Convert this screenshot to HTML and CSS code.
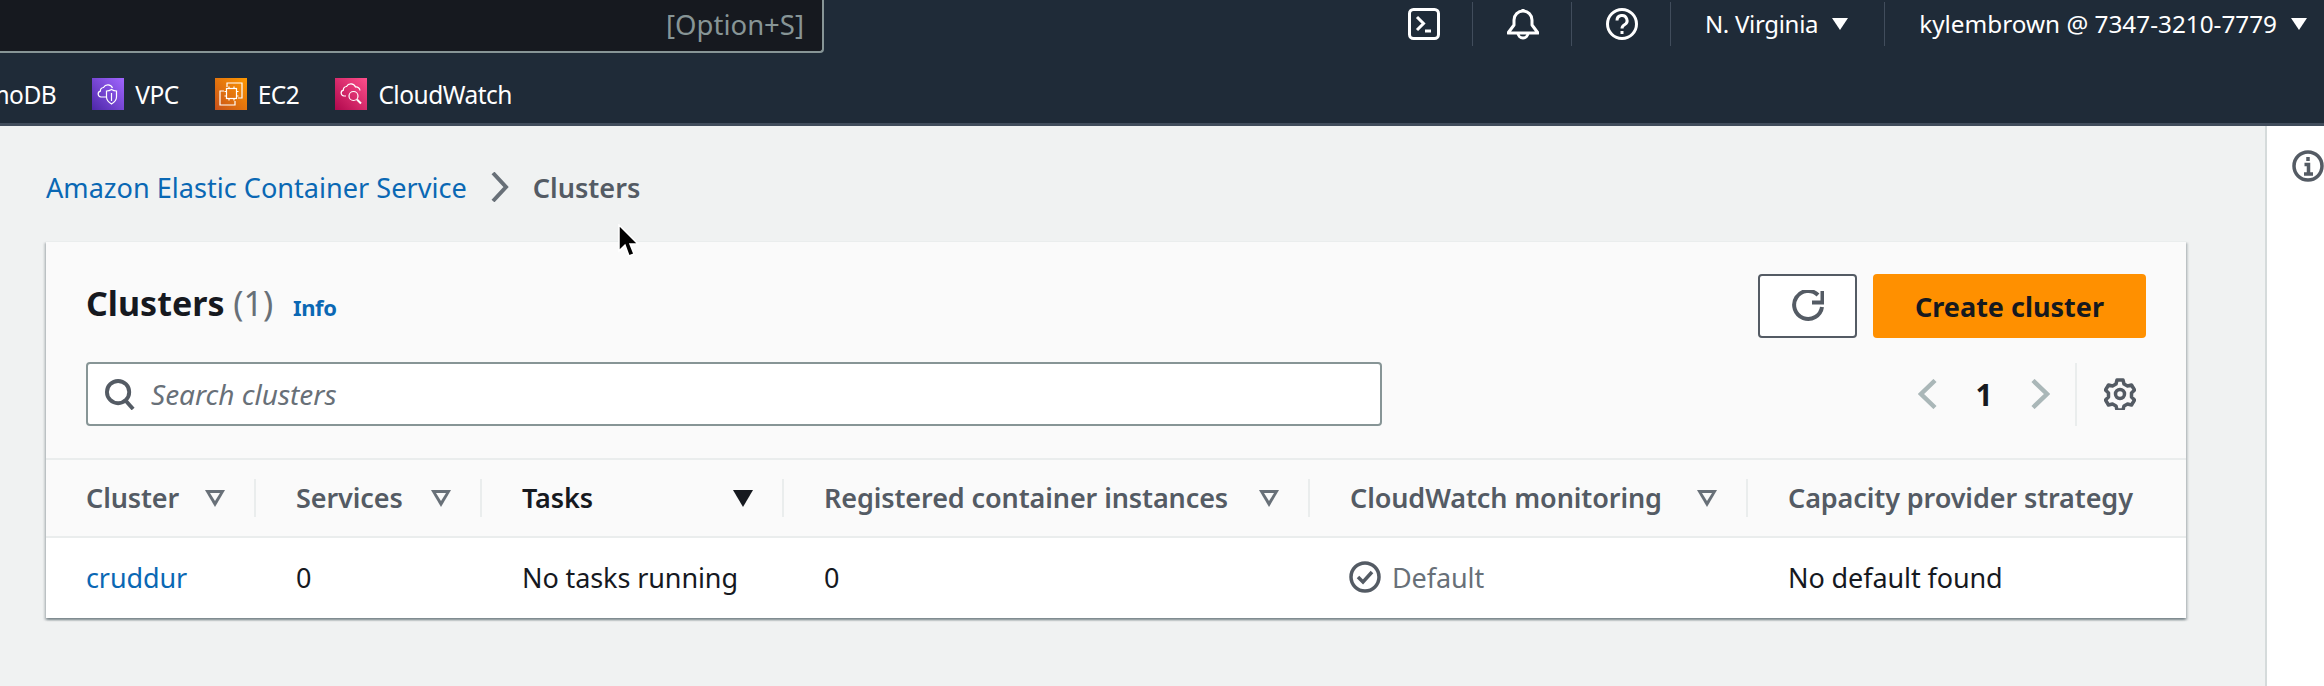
FILE: index.html
```html
<!DOCTYPE html>
<html lang="en">
<head>
    <meta charset="UTF-8">
    <title>Clusters | Amazon Elastic Container Service</title>
    <link rel="stylesheet" href="styles.css">
</head>
<body>
    <header class="topnav">
        <div class="top-row">
            <div class="global-search"><span>[Option+S]</span></div>
            <div class="top-tools">
                <div class="top-item">
                    <svg class="top-icon" viewBox="0 0 32 32" fill="none" stroke="#fff" stroke-width="3"><rect x="1.5" y="1.5" width="29" height="29" rx="4"/><path d="M9 9l6.5 6.5L9 22"/><path d="M17 23h6"/></svg>
                </div>
                <div class="top-item">
                    <svg class="top-icon" viewBox="0 0 32 32" fill="none" stroke="#fff" stroke-width="3"><path d="M16 1v3"/><path d="M1 25h30l-6-8v-5a9 9 0 0 0-18 0v5z" stroke-linejoin="round"/><path d="M11 25a5 5 0 0 0 10 0"/></svg>
                </div>
                <div class="top-item">
                    <svg class="top-icon" viewBox="0 0 32 32" fill="none" stroke="#fff" stroke-width="3"><circle cx="16" cy="16" r="14.5"/><path d="M11 12.5a5 5 0 1 1 7.5 4.3c-1.700 1-2.500 1.700-2.500 3.700"/><path d="M16 23v3"/></svg>
                </div>
                <div class="top-item top-text region">N. Virginia <i class="caret"></i></div>
                <div class="top-item top-text account">kylembrown @ 7347-3210-7779 <i class="caret"></i></div>
            </div>
        </div>
        <nav class="favorites">
            <a class="fav">DynamoDB</a>
            <a class="fav">
                <svg class="tile" viewBox="0 0 32 32">
                    <defs><linearGradient id="tileVpc" x1="0" y1="1" x2="1" y2="0"><stop offset="0" stop-color="#4d27a8"/><stop offset="1" stop-color="#a166ff"/></linearGradient></defs>
                    <rect width="32" height="32" fill="url(#tileVpc)"/>
                    <g fill="none" stroke="#fff" stroke-width="1.200"><path d="M14 19H9a3 3 0 0 1-.6-5.900 3.500 3.500 0 0 1 3.100-3.600 5 5 0 0 1 9 .5"/><path d="M19.500 11.500c2 1.300 3.500 1.500 5 1.500v6c0 3.500-2.500 5.500-5 7-2.500-1.500-5-3.500-5-7v-6c1.500 0 3-.2 5-1.500z"/><path d="M19.500 15v8"/></g>
                </svg>
                VPC
            </a>
            <a class="fav">
                <svg class="tile" viewBox="0 0 32 32">
                    <defs><linearGradient id="tileEc2" x1="0" y1="1" x2="1" y2="0"><stop offset="0" stop-color="#c8511b"/><stop offset="1" stop-color="#ff9900"/></linearGradient></defs>
                    <rect width="32" height="32" fill="url(#tileEc2)"/>
                    <g fill="none" stroke="#fff" stroke-width="1.200"><path d="M12 9V5h15v15h-4"/><path d="M9 13H5v14h15v-4"/><rect x="11.500" y="10.500" width="10" height="10"/><path d="M14 8.500v2M19 8.500v2M14 20.500v2M19 20.500v2M9.500 13.500h2M9.500 18h2M21.500 13.500h2M21.500 18h2"/></g>
                </svg>
                EC2
            </a>
            <a class="fav">
                <svg class="tile" viewBox="0 0 32 32">
                    <defs><linearGradient id="tileCw" x1="0" y1="1" x2="1" y2="0"><stop offset="0" stop-color="#b0084d"/><stop offset="1" stop-color="#ff4f8b"/></linearGradient></defs>
                    <rect width="32" height="32" fill="url(#tileCw)"/>
                    <g fill="none" stroke="#fff" stroke-width="1.200"><path d="M11 18H9a3 3 0 0 1-.6-5.900 3.500 3.500 0 0 1 3.100-3.600 5 5 0 0 1 9 .5 4 4 0 0 1 4.500 3.500"/><circle cx="18.500" cy="18" r="4.500"/><path d="M22 21.500l4 4" stroke-width="2"/></g>
                </svg>
                CloudWatch
            </a>
        </nav>
    </header>

    <div class="layout">
        <main class="content">
            <div class="breadcrumb">
                <a class="link">Amazon Elastic Container Service</a>
                <svg class="crumb-sep" viewBox="0 0 18 30" fill="none" stroke="#687078" stroke-width="4"><path d="M2 1l13 14L2 29"/></svg>
                <span class="crumb-current">Clusters</span>
            </div>

            <section class="card">
                <div class="card-head">
                    <div class="title-row">
                        <h1 class="card-title">Clusters <span class="count">(1)</span> <a class="info">Info</a></h1>
                        <div class="actions">
                            <button class="btn-refresh">
                                <svg class="icon-32" viewBox="0 0 32 32" fill="none" stroke="#545b64" stroke-width="4"><path d="M26 5A14 14 0 1 0 30 17"/><path d="M30.500 1v11.500H20"/></svg>
                            </button>
                            <button class="btn-primary">Create cluster</button>
                        </div>
                    </div>
                    <div class="tool-row">
                        <div class="search">
                            <svg class="search-icon" viewBox="0 0 32 32" fill="none" stroke="#545b64" stroke-width="4"><circle cx="13.500" cy="13.500" r="11.500"/><path d="M21 22l8 9"/></svg>
                            <span class="placeholder">Search clusters</span>
                        </div>
                        <div class="pager">
                            <svg class="pager-arrow" viewBox="0 0 20 30" fill="none" stroke="#aab7b8" stroke-width="4.500"><path d="M17 1.500L3 15l14 13.500"/></svg>
                            <span class="page-num">1</span>
                            <svg class="pager-arrow" viewBox="0 0 20 30" fill="none" stroke="#aab7b8" stroke-width="4.500"><path d="M3 1.500L17 15 3 28.500"/></svg>
                            <div class="pager-sep">
                                <svg class="icon-32" viewBox="0 0 32 32" fill="none" stroke="#545b64" stroke-width="3.500"><circle cx="16" cy="16" r="4.500"/><path d="M13 2h6l1 4 3.500 2 4-1 3 5-3 3v4l3 3-3 5-4-1-3.500 2-1 4h-6l-1-4-3.500-2-4 1-3-5 3-3v-4l-3-3 3-5 4 1 3.500-2z" stroke-linejoin="round"/></svg>
                            </div>
                        </div>
                    </div>
                </div>

                <table class="clusters">
                    <colgroup>
                        <col class="col-cluster"><col class="col-services"><col class="col-tasks"><col class="col-instances"><col class="col-monitoring"><col class="col-strategy">
                    </colgroup>
                    <thead>
                        <tr>
                            <th><div class="th-inner">Cluster <i class="filter"></i></div></th>
                            <th><div class="th-inner">Services <i class="filter"></i></div></th>
                            <th class="sorted"><div class="th-inner">Tasks <i class="filter"></i></div></th>
                            <th><div class="th-inner">Registered container instances <i class="filter"></i></div></th>
                            <th><div class="th-inner">CloudWatch monitoring <i class="filter"></i></div></th>
                            <th><div class="th-inner last">Capacity provider strategy</div></th>
                        </tr>
                    </thead>
                    <tbody>
                        <tr>
                            <td><a class="link">cruddur</a></td>
                            <td>0</td>
                            <td>No tasks running</td>
                            <td>0</td>
                            <td>
                                <span class="status">
                                    <svg class="icon-32" viewBox="0 0 32 32" fill="none" stroke="#545b64" stroke-width="3.500"><circle cx="16" cy="16" r="14"/><path d="M9 16l5 5 9-10"/></svg>
                                    Default
                                </span>
                            </td>
                            <td>No default found</td>
                        </tr>
                    </tbody>
                </table>
            </section>
        </main>

        <aside class="side-panel">
            <svg class="icon-32" viewBox="0 0 32 32" fill="none" stroke="#545b64" stroke-width="3.500"><circle cx="16" cy="16" r="14"/><path d="M16 7v4M12.500 14.500H16.500V24M12 24h9"/></svg>
        </aside>
    </div>

    <svg class="cursor" viewBox="0 0 22 34"><path d="M2 1v26l6-6 4 11 5-2-4-10h8z" fill="#000" stroke="#fff" stroke-width="1.500"/></svg>
</body>
</html>
```

FILE: styles.css
```css
* {
    box-sizing: border-box;
}
html, body {
    height: 100%;
}
body {
    margin: 0;
    font-family: "Noto Sans", Arial, sans-serif;
    font-size: 27px;
    color: #16191f;
    background-color: #f0f2f2;
    overflow: hidden;
    position: relative;
}
a {
    text-decoration: none;
}
.link {
    color: #0a68b4;
}

/* top bar */
.topnav {
    height: 126px;
    background-color: #1f2b38;
    border-bottom: 3px solid #414d5c;
    color: #fff;
}
.top-row {
    display: flex;
    justify-content: space-between;
    height: 53px;
}
.global-search {
    width: 824px;
    height: 53px;
    display: flex;
    justify-content: flex-end;
    align-items: center;
    padding: 0 18px 2px 0;
    background-color: #16191f;
    border-right: 2px solid #879596;
    border-bottom: 2px solid #879596;
    border-bottom-right-radius: 4px;
    color: #879596;
    font-size: 27.500px;
}
.top-tools {
    display: flex;
    padding-right: 17px;
}
.top-item {
    display: flex;
    align-items: center;
    height: 44px;
    margin-top: 2px;
    padding: 0 32px 0 34px;
    border-right: 1px solid #414d5c;
}
.top-item:last-child {
    border-right: none;
    padding-right: 0;
}
.top-icon {
    width: 32px;
    height: 32px;
}
.top-text {
    gap: 14px;
    padding-bottom: 2px;
    font-size: 24.300px;
}
.region {
    padding-right: 36px;
    font-size: 24px;
    letter-spacing: -0.3px;
}
.caret {
    width: 0;
    height: 0;
    margin-top: 2px;
    border-left: 8px solid transparent;
    border-right: 8px solid transparent;
    border-top: 12px solid #fff;
}
.favorites {
    display: flex;
    justify-content: flex-end;
    gap: 36px;
    width: 512px;
    padding-top: 25px;
    overflow: hidden;
    white-space: nowrap;
    font-size: 24.500px;
    letter-spacing: -0.5px;
}
.fav {
    display: flex;
    align-items: center;
    gap: 11px;
    height: 32px;
    color: #fff;
}
.tile {
    width: 32px;
    height: 32px;
    flex: none;
}

/* main area */
.layout {
    display: flex;
    height: 560px;
}
.content {
    flex: 1;
    padding: 43px 79px 0 46px;
}
.side-panel {
    width: 59px;
    padding: 24px 0 0 25px;
    background-color: #fff;
    border-left: 2px solid #d5dbdb;
}
.breadcrumb {
    display: flex;
    align-items: center;
    height: 36px;
    margin-bottom: 36px;
    font-size: 27.100px;
}
.crumb-sep {
    width: 18px;
    height: 30px;
    margin: 0 24px;
}
.crumb-current {
    color: #545b64;
    font-weight: 600;
}

/* card */
.card {
    width: 2140px;
    background-color: #fff;
    box-shadow: 0 2px 2px 0 rgba(0, 28, 36, 0.3), 2px 2px 2px 0 rgba(0, 28, 36, 0.15), -2px 2px 2px 0 rgba(0, 28, 36, 0.15);
}
.card-head {
    height: 217px;
    padding: 32px 40px 0 40px;
    background-color: #fafafa;
    border-top: 1px solid #eaeded;
}
.title-row, .tool-row {
    display: flex;
    justify-content: space-between;
}
.title-row {
    height: 64px;
    align-items: center;
}
.tool-row {
    margin-top: 24px;
    align-items: center;
}
.card-title {
    margin: 0;
    padding-bottom: 6px;
    font-size: 34px;
    font-weight: 700;
}
.count {
    color: #687078;
    font-weight: 400;
}
.info {
    margin-left: 11px;
    color: #0a68b4;
    font-size: 22px;
    font-weight: 700;
    letter-spacing: -0.4px;
}
.actions {
    display: flex;
    gap: 16px;
}
.btn-refresh {
    width: 99px;
    height: 64px;
    display: flex;
    align-items: center;
    justify-content: center;
    background-color: #fff;
    border: 2px solid #545b64;
    border-radius: 4px;
}
.btn-primary {
    width: 273px;
    height: 64px;
    background-color: #ff9000;
    border: none;
    border-radius: 4px;
    color: #16191f;
    font-family: inherit;
    font-size: 27px;
    font-weight: 700;
}
.icon-32 {
    width: 32px;
    height: 32px;
    flex: none;
}
.search {
    width: 1296px;
    height: 64px;
    display: flex;
    align-items: center;
    gap: 15px;
    padding-left: 17px;
    background-color: #fff;
    border: 2px solid #879596;
    border-radius: 4px;
}
.search-icon {
    width: 31px;
    height: 31px;
}
.placeholder {
    color: #687078;
    font-size: 28px;
    font-style: italic;
}
.pager {
    display: flex;
    align-items: center;
    margin-right: 10px;
}
.pager-arrow {
    width: 20px;
    height: 30px;
}
.page-num {
    width: 92px;
    text-align: center;
    font-size: 30px;
    font-weight: 700;
}
.pager-sep {
    display: flex;
    align-items: center;
    height: 63px;
    margin-left: 25px;
    padding-left: 27px;
    border-left: 2px solid #eaeded;
}

/* table */
.clusters {
    width: 100%;
    table-layout: fixed;
    border-collapse: separate;
    border-spacing: 0;
}
.col-cluster { width: 210px; }
.col-services { width: 226px; }
.col-tasks { width: 302px; }
.col-instances { width: 526px; }
.col-monitoring { width: 438px; }
.clusters th {
    height: 80px;
    padding: 0;
    background-color: #fafafa;
    border-top: 2px solid #eaeded;
    border-bottom: 2px solid #eaeded;
    color: #545b64;
    font-weight: 600;
    letter-spacing: -0.1px;
    text-align: left;
}
.clusters th.sorted {
    color: #16191f;
}
.th-inner {
    display: flex;
    justify-content: space-between;
    align-items: center;
    height: 38px;
    padding: 0 29px 2px 40px;
    border-right: 2px solid #eaeded;
    white-space: nowrap;
}
.th-inner.last {
    border-right: none;
    padding-right: 0;
}
.filter {
    width: 0;
    height: 0;
    margin-top: 2px;
    position: relative;
    border-left: 10px solid transparent;
    border-right: 10px solid transparent;
    border-top: 17px solid #687078;
}
.filter::after {
    content: "";
    position: absolute;
    left: -5px;
    top: -14px;
    border-left: 5px solid transparent;
    border-right: 5px solid transparent;
    border-top: 8px solid #fafafa;
}
.sorted .filter {
    border-top-color: #16191f;
}
.sorted .filter::after {
    display: none;
}
.clusters td {
    height: 80px;
    padding: 0 0 2px 40px;
    background-color: #fff;
    white-space: nowrap;
    letter-spacing: -0.1px;
}
.status {
    display: flex;
    align-items: center;
    gap: 11px;
    margin-left: -1px;
    color: #687078;
}

/* mouse pointer from the capture */
.cursor {
    position: absolute;
    left: 617px;
    top: 224px;
    width: 22px;
    height: 34px;
}
```
